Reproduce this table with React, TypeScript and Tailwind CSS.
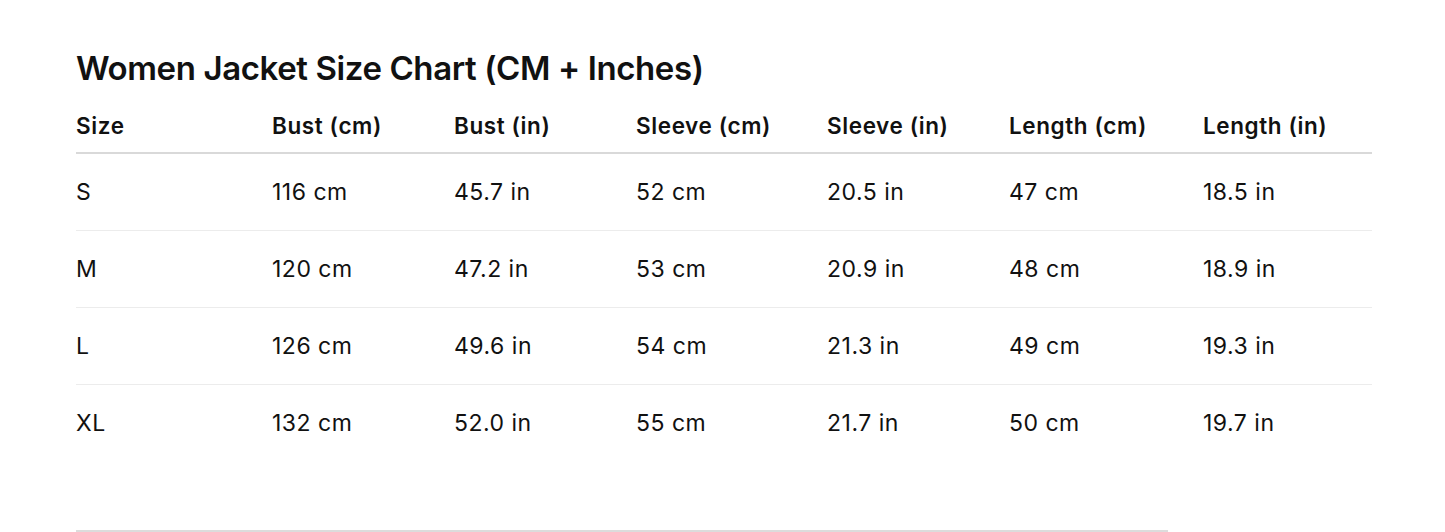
const headers = ['Size', 'Bust (cm)', 'Bust (in)', 'Sleeve (cm)', 'Sleeve (in)', 'Length (cm)', 'Length (in)'];

const rows = [
  ['S', '116 cm', '45.7 in', '52 cm', '20.5 in', '47 cm', '18.5 in'],
  ['M', '120 cm', '47.2 in', '53 cm', '20.9 in', '48 cm', '18.9 in'],
  ['L', '126 cm', '49.6 in', '54 cm', '21.3 in', '49 cm', '19.3 in'],
  ['XL', '132 cm', '52.0 in', '55 cm', '21.7 in', '50 cm', '19.7 in'],
];

const cols = 'grid grid-cols-[196px_182px_182px_191px_182px_194px_169px]';

export default function App() {
  return (
    <div className="w-[1445px] h-[532px] overflow-hidden bg-white text-[#111] font-['Inter',sans-serif]">
      <div className="pl-[76px] pt-[46px]">
        <h2 className="text-[33px] font-semibold tracking-[-0.4px] leading-[44px]">
          Women Jacket Size Chart (CM + Inches)
        </h2>

        <div className="w-[1296px] mt-[10px]">
          {/* header */}
          <div className={`${cols} h-[54px] items-center border-b-2 border-[#d9d9d9]`}>
            {headers.map((h) => (
              <div key={h} className="text-[22.5px] font-semibold tracking-[0.6px]">
                {h}
              </div>
            ))}
          </div>

          {rows.map((r, i) => (
            <div
              key={r[0]}
              className={`${cols} h-[77px] items-center ${i < rows.length - 1 ? 'border-b border-[#ececec]' : ''}`}
            >
              {r.map((c, j) => (
                <div key={j} className="text-[23px] tracking-[0.5px]">
                  {c}
                </div>
              ))}
            </div>
          ))}
        </div>

        <div className="w-[1092px] mt-[68px] border-t-2 border-[#dcdcdc]" />
      </div>
    </div>
  );
}
